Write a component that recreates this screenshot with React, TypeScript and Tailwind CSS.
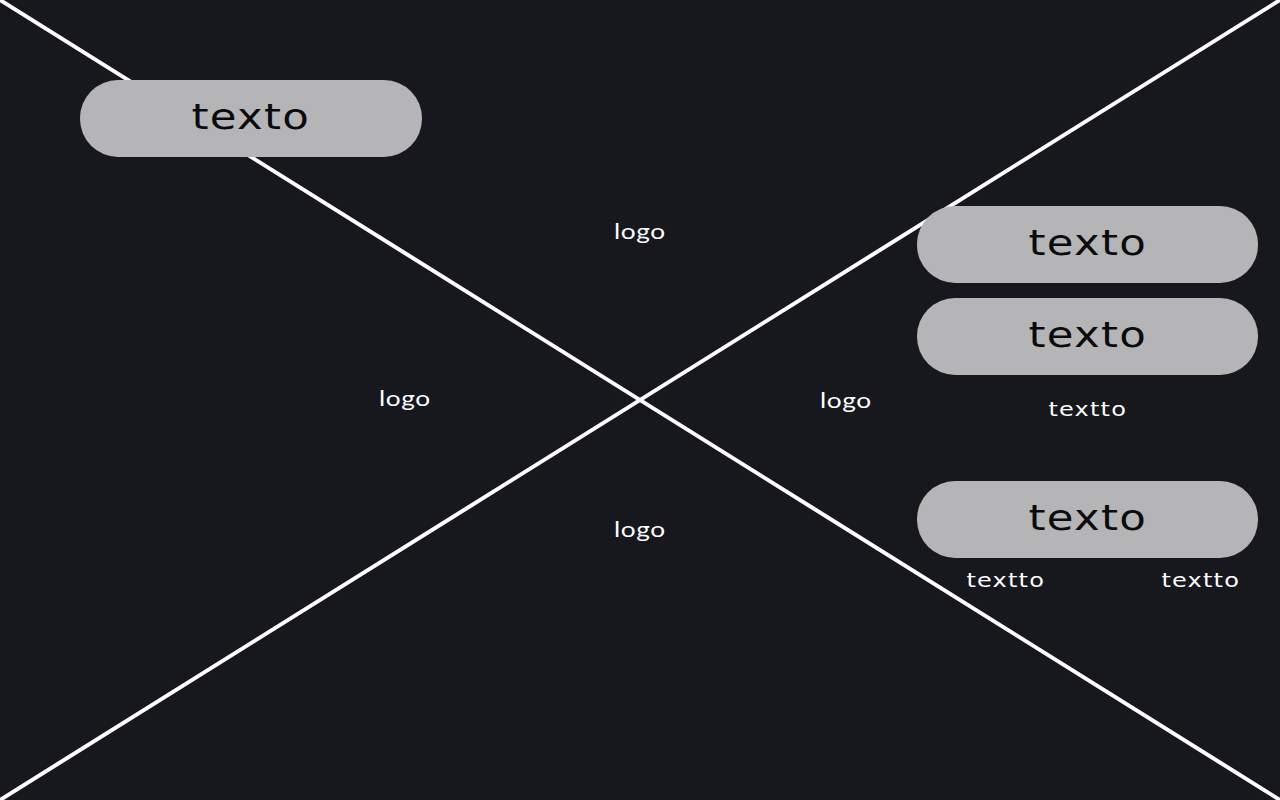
const wide = "font-['DejaVu_Sans',sans-serif]";

function Pill({ label, className = '' }: { label: string; className?: string }) {
  return (
    <div
      className={`w-[341px] h-[77px] rounded-[38px] bg-[#b5b5b7] flex items-center justify-center pb-[3px] ${className}`}
    >
      <span className={`${wide} inline-block text-[35px] leading-none tracking-[1px] scale-x-[1.24] text-[#0b0b0d]`}>
        {label}
      </span>
    </div>
  );
}

function Logo({ className = '' }: { className?: string }) {
  return (
    <span
      className={`font-['Lato',sans-serif] inline-block origin-left scale-x-[1.25] text-[21px] leading-[28px] tracking-[0.5px] text-white ${className}`}
    >
      logo
    </span>
  );
}

function Caption({ className = '' }: { className?: string }) {
  return (
    <span
      className={`${wide} inline-block scale-x-[1.2] text-[20px] leading-6 tracking-[1px] text-white ${className}`}
    >
      textto
    </span>
  );
}

export default function App() {
  return (
    <div className="relative w-full h-[800px] overflow-hidden bg-[#17171e]">
      {/* crossing guide lines */}
      <svg className="absolute inset-0 w-full h-full" viewBox="0 0 1280 800" preserveAspectRatio="none">
        <line x1="0" y1="0" x2="1280" y2="800" stroke="#fff" strokeWidth="4" />
        <line x1="1280" y1="0" x2="0" y2="800" stroke="#fff" strokeWidth="4" />
      </svg>

      <div className="relative flex">
        {/* left area */}
        <div className="w-[917px] flex flex-col items-start">
          <Pill label="texto" className="mt-[80px] ml-[80px] w-[342px]" />
          <Logo className="mt-[60px] ml-[614px]" />
          <div className="mt-[139px] ml-[379px] grid grid-cols-[441px_auto]">
            <Logo />
            <Logo className="mt-[2px]" />
          </div>
          <Logo className="mt-[101px] ml-[614px]" />
        </div>

        {/* right column */}
        <div className="w-[341px] flex flex-col pt-[206px]">
          <Pill label="texto" />
          <Pill label="texto" className="mt-[15px]" />
          <div className="mt-[22px] text-center">
            <Caption />
          </div>
          <Pill label="texto" className="mt-[59px]" />
          <div className="mt-[10px] flex justify-between pl-[56px] pr-[24px]">
            <Caption />
            <Caption />
          </div>
        </div>
      </div>
    </div>
  );
}
